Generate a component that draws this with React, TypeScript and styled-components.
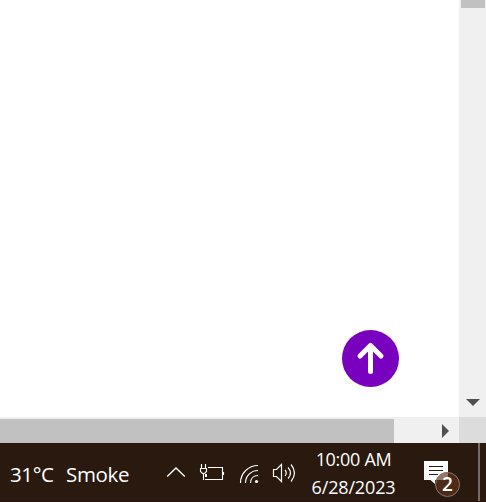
import React from "react";
import styled, { createGlobalStyle } from "styled-components";

const GlobalStyle = createGlobalStyle`
  * { box-sizing: border-box; }
  body { margin: 0; overflow: hidden; background: #fff; }
`;

const Screen = styled.main`
  width: 486px;
  height: 502px;
  display: grid;
  grid-template: 417px 26px 59px / 459px 27px;
  overflow: hidden;
  background: #fff;
`;

const Content = styled.section`
  display: flex;
  align-items: flex-end;
  justify-content: flex-end;
  padding: 0 60px 30px 0;
`;

const TopButton = styled.button`
  width: 57px;
  height: 57px;
  padding: 0;
  border: 0;
  border-radius: 50%;
  background: #7a00bf;
  box-shadow: 0 4px 0 #fff, 0 5px 0 -0.5px #f8ecfa;
`;

const VerticalTrack = styled.div`
  display: flex;
  flex-direction: column;
  justify-content: space-between;
  padding: 0 1px 10px 2px;
  background: #f0f0f0;
`;

const HorizontalTrack = styled.div`
  display: flex;
  align-items: center;
  justify-content: space-between;
  padding-right: 9px;
  background: #f0f0f0;
`;

const Thumb = styled.div<{ $vertical?: boolean }>`
  width: ${({ $vertical }) => ($vertical ? "24px" : "394px")};
  height: ${({ $vertical }) => ($vertical ? "8px" : "24px")};
  align-self: ${({ $vertical }) => ($vertical ? "auto" : "flex-end")};
  background: #c1c1c1;
`;

const DownArrow = styled.svg`
  display: block;
  margin-left: 5px;
`;

const RightArrow = styled.svg`
  display: block;
  margin-top: 2px;
`;

const Corner = styled.div`
  background: #dcdcdc;
`;

const Taskbar = styled.footer`
  grid-column: 1 / -1;
  display: flex;
  background: #29190f;
  border-bottom: 1px solid #2c100b;
  color: #fff;
  font-family: "Open Sans", "Noto Sans", sans-serif;
`;

const Weather = styled.div`
  width: 160px;
  display: flex;
  gap: 12px;
  padding: 17px 0 0 10px;
  font-size: 20.5px;
  line-height: 28px;
  letter-spacing: -0.35px;
  white-space: nowrap;
`;

const Temperature = styled.span`
  width: 44px;
  letter-spacing: -0.4px;
`;

const Tray = styled.svg`
  flex: 0 0 145px;
`;

const Clock = styled.div`
  width: 97px;
  display: flex;
  flex-direction: column;
  align-items: center;
  padding-top: 2px;
  font-size: 18px;
  line-height: 28px;
  letter-spacing: -0.15px;
  white-space: nowrap;
`;

const Time = styled.span`
  letter-spacing: -0.3px;
`;

const Notifications = styled.div`
  position: relative;
  width: 76px;
  margin-left: auto;
`;

const NotificationIcon = styled.svg`
  display: block;
`;

const Badge = styled.span`
  position: absolute;
  left: 25px;
  top: 29px;
  width: 25px;
  height: 25px;
  display: grid;
  place-items: center;
  border: 1px solid #8d7468;
  border-radius: 50%;
  font-size: 19px;
  font-weight: 600;
  line-height: 23px;
`;

export default function App() {
  return (
    <>
      <GlobalStyle />
      <Screen>
        <Content>
          <TopButton aria-label="Back to top">
            <svg width="57" height="57" viewBox="0 0 57 57" fill="none" stroke="#fff" strokeWidth="5" strokeLinecap="round" strokeLinejoin="round">
              <path d="M28.5 41.5V16M18 26l10.5-10.5L39 26" />
            </svg>
          </TopButton>
        </Content>
        <VerticalTrack>
          <Thumb $vertical />
          <DownArrow width="14" height="9" viewBox="0 0 14 9">
            <path d="M0 1H14L7 8Z" fill="#505050" />
          </DownArrow>
        </VerticalTrack>
        <HorizontalTrack>
          <Thumb />
          <RightArrow width="8" height="14" viewBox="0 0 8 14">
            <path d="M0 0L7 7L0 14Z" fill="#505050" />
          </RightArrow>
        </HorizontalTrack>
        <Corner />
        <Taskbar>
          <Weather>
            <Temperature>31°C</Temperature>
            <span>Smoke</span>
          </Weather>
          <Tray width="145" height="59" viewBox="160 443 145 59" fill="none" stroke="#fff">
            <path d="M167.2 476.5L176 468L184.8 476.5" strokeWidth="1.4" />
            <path d="M208 467.5H222.5V479.5H205M223.5 472V475M201.5 464V468M205.5 464V468M203.5 474V480" strokeWidth="1.15" />
            <path d="M200.5 468.5H206.5V471.5L204.5 473.5H202.5L200.5 471.5Z" strokeWidth="1.1" />
            <path d="M205 474h2v3h-2Z" fill="#fff" stroke="none" />
            <path d="M240.5 483C240.5 473 248.5 465.5 258 465.5M245.5 483C245.5 476 251 470.5 258 470.5M250.5 483C250.5 478.5 253.5 475.5 258 475.5" strokeWidth="1.2" />
            <circle cx="256.5" cy="481.5" r="1.6" fill="#fff" stroke="none" />
            <path d="M273.5 469.5H276.5L281.5 464.5V481.5L276.5 476.5H273.5Z" strokeWidth="1.2" />
            <path d="M285 470Q287.5 473 285 476M288 467.5Q293 473 288 478.5M291 464.5Q298 473 291 481.5" strokeWidth="1.2" />
          </Tray>
          <Clock>
            <Time>10:00 AM</Time>
            <span>6/28/2023</span>
          </Clock>
          <Notifications>
            <NotificationIcon width="76" height="58" viewBox="410 443 76 58">
              <path d="M424 461H448V480H435V484L430.5 480H424Z" fill="#fff" />
              <path d="M429 466.5H443M429 470.5H443M429 474.5H438" stroke="#29190f" />
              <circle cx="447.5" cy="484.5" r="12" fill="#4c2a16" />
              <path d="M436 480A12 12 0 0 1 448 472V480Z" fill="#937769" />
              <path d="M479 443V501" stroke="#766c65" strokeWidth="2" />
            </NotificationIcon>
            <Badge>2</Badge>
          </Notifications>
        </Taskbar>
      </Screen>
    </>
  );
}
